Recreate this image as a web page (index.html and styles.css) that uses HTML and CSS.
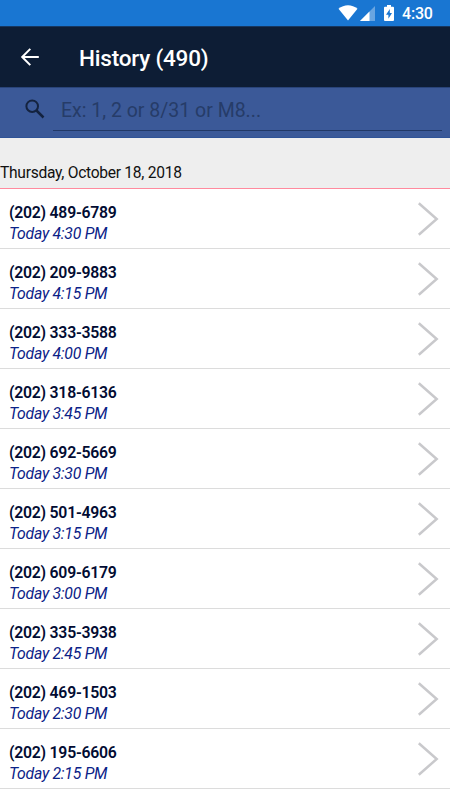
FILE: index.html
```html
<!DOCTYPE html>
<html lang="en">
<head>
<meta charset="utf-8">
<title>History</title>
<link rel="stylesheet" href="styles.css">
</head>
<body>
<svg class="defs" width="0" height="0"><symbol id="chevron" viewBox="0 0 22 36"><path d="M1.800 2.200 19.700 18 1.800 33.800" fill="none" stroke="#c9c9cc" stroke-width="2.500"/></symbol></svg>
<div class="status">
  <svg class="wifi" width="20" height="16" viewBox="0 0 20 16"><path d="M.5 3.800C6-.9 14-.9 19.500 3.800L10 15.600Z" fill="#fff"/></svg>
  <svg class="signal" width="15" height="16" viewBox="0 0 15 16"><path d="M0 16 15 1V16Z" fill="#fff" opacity=".35"/><path d="M0 16 9.500 6.500V16Z" fill="#fff"/></svg>
  <svg class="battery" width="10" height="17" viewBox="0 0 10 17"><path d="M3 0h4v1.800h2q1 0 1 1V15q0 1-1 1H1q-1 0-1-1V2.800q0-1 1-1h2Z" fill="#fff"/><path d="M5.800 4 2 9.800h2.400v4L8 8H5.800Z" fill="#1976d2"/></svg>
  <span class="clock">4:30</span>
</div>
<header class="bar">
  <svg class="back" width="20" height="20" viewBox="0 0 20 20"><path d="M18.800 10H2.500M10.300 1.900 2.200 10l8.100 8.100" fill="none" stroke="#fff" stroke-width="2"/></svg>
  <h1>History (490)</h1>
</header>
<div class="search">
  <svg class="glass" width="20" height="20" viewBox="0 0 20 20"><circle cx="7.200" cy="7.200" r="5.800" fill="none" stroke="#14233f" stroke-width="2"/><path d="m11.500 11.500 7 7" stroke="#14233f" stroke-width="2.500"/></svg>
  <div class="field">Ex: 1, 2 or 8/31 or M8...</div>
</div>
<div class="date">Thursday, October 18, 2018</div>
<ul class="calls">
  <li><div><b>(202) 489-6789</b><i>Today 4:30 PM</i></div><svg class="chev"><use href="#chevron"/></svg></li>
  <li><div><b>(202) 209-9883</b><i>Today 4:15 PM</i></div><svg class="chev"><use href="#chevron"/></svg></li>
  <li><div><b>(202) 333-3588</b><i>Today 4:00 PM</i></div><svg class="chev"><use href="#chevron"/></svg></li>
  <li><div><b>(202) 318-6136</b><i>Today 3:45 PM</i></div><svg class="chev"><use href="#chevron"/></svg></li>
  <li><div><b>(202) 692-5669</b><i>Today 3:30 PM</i></div><svg class="chev"><use href="#chevron"/></svg></li>
  <li><div><b>(202) 501-4963</b><i>Today 3:15 PM</i></div><svg class="chev"><use href="#chevron"/></svg></li>
  <li><div><b>(202) 609-6179</b><i>Today 3:00 PM</i></div><svg class="chev"><use href="#chevron"/></svg></li>
  <li><div><b>(202) 335-3938</b><i>Today 2:45 PM</i></div><svg class="chev"><use href="#chevron"/></svg></li>
  <li><div><b>(202) 469-1503</b><i>Today 2:30 PM</i></div><svg class="chev"><use href="#chevron"/></svg></li>
  <li><div><b>(202) 195-6606</b><i>Today 2:15 PM</i></div><svg class="chev"><use href="#chevron"/></svg></li>
</ul>
</body>
</html>
```
FILE: styles.css
```css
* { box-sizing: border-box; }
html { overflow: hidden; }
body { margin: 0; width: 450px; height: 800px; overflow: hidden; background: #fff; font-family: Roboto, sans-serif; }
svg { display: block; flex: none; }
.defs { position: absolute; }
.status { display: flex; height: 26px; padding: 5px 18px 0 0; justify-content: flex-end; background: #1976d2; color: #fff; }
.signal { margin: 0 1px; }
.wifi { margin-right: 1px; }
.battery { margin-left: 8px; }
.clock { width: 30px; margin-left: 8px; font-size: 16px; letter-spacing: -.2px; font-weight: 500; line-height: 18px; white-space: nowrap; }
.bar { display: flex; align-items: center; height: 61px; padding-left: 20px; background: #0d1d35; border-top: 1px solid #16365f; color: #fff; }
.bar h1 { margin: 1px 0 0 39px; font-size: 22.500px; letter-spacing: -.2px; font-weight: 500; line-height: 26px; }
.search { display: flex; height: 51px; padding: 0 8px 6px 25px; background: #3b5998; border-top: 1px solid #29447a; border-bottom: 1px solid #2f5397; }
.glass { margin-top: 11px; }
.field { flex: 1; margin-left: 8px; padding: 10px 0 0 8px; border-bottom: 1px solid #213866; color: #263c68; font-size: 19.500px; line-height: 26px; }
.date { height: 51px; padding-top: 25px; background: #eee; border-bottom: 1px solid #ff8a9e; color: #111; font-size: 15.600px; letter-spacing: -.28px; line-height: 20px; }
.calls { margin: 0; padding: 0; list-style: none; }
.calls li { display: flex; justify-content: space-between; height: 60px; padding: 12px 11px 0 9px; border-bottom: 1px solid #dcdcdc; }
.calls b, .calls i { display: block; font-size: 15.800px; line-height: 20px; }
.calls b { padding-top: 2px; font-weight: 600; letter-spacing: -.24px; color: #020c33; }
.calls i { padding-top: 1px; font-weight: 400; letter-spacing: -.27px; color: #0b2287; }
.chev { width: 22px; height: 36px; }
```
